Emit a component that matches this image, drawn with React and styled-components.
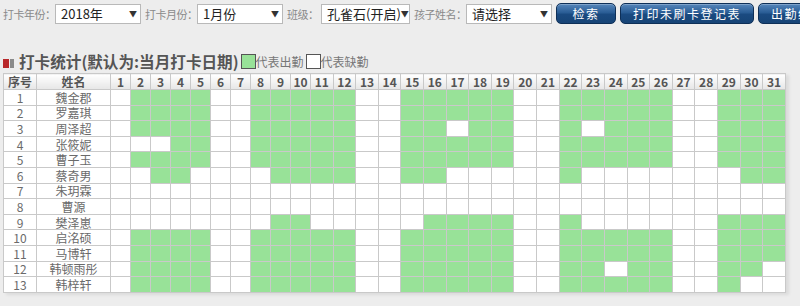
import React from 'react';
import styled, { createGlobalStyle } from 'styled-components';

const GlobalStyle = createGlobalStyle`
  body {
    margin: 0;
    background: #ededed;
    font-family: "Noto Sans CJK SC", "Noto Sans", sans-serif;
  }
`;

const Page = styled.div`
  width: 800px;
  height: 306px;
  overflow: hidden;
`;

const Toolbar = styled.div`
  display: flex;
  align-items: center;
  padding: 3px 0 0 3px;
  white-space: nowrap;
`;

const Field = styled.div`
  display: flex;
  align-items: center;
  margin-right: 4px;
`;

const Label = styled.span`
  width: ${props => props.w}px;
  font-size: 11px;
  letter-spacing: -0.5px;
  color: #8a8a8a;
`;

const SelectBox = styled.div`
  box-sizing: border-box;
  width: ${props => props.w}px;
  height: 20px;
  display: flex;
  align-items: center;
  justify-content: space-between;
  padding: 0 3px 0 5px;
  background: #fff;
  border: 1px solid #b9b9b9;
  font-size: 13px;
  color: #222;
`;

const Arrow = styled.span`
  font-size: 8px;
  color: #333;
`;

const Button = styled.div`
  box-sizing: border-box;
  width: ${props => props.w}px;
  height: 21px;
  margin-right: 4px;
  flex-shrink: 0;
  display: flex;
  align-items: center;
  justify-content: center;
  border: 1px solid #0e2f57;
  border-radius: 5px;
  background: linear-gradient(#5686bb 0%, #2a5d95 45%, #1a4a80 55%, #174476 100%);
  color: #fff;
  font-size: 12px;
  letter-spacing: 1.5px;
  box-shadow: inset 0 1px 0 rgba(255, 255, 255, 0.25);
`;

const TitleRow = styled.div`
  display: flex;
  align-items: flex-end;
  margin: 26px 0 0 3px;
  height: 22px;
`;

const Mark = styled.span`
  display: flex;
  align-items: center;
  gap: 1px;
  margin: 0 5px 4px 0;
`;

const MarkBlock = styled.span`
  width: ${props => props.w}px;
  height: 9px;
  background: ${props => props.c};
`;

const Title = styled.span`
  font-size: 15.6px;
  font-weight: bold;
  color: #555;
  line-height: 22px;
  margin-right: 2px;
`;

const Legend = styled.span`
  display: flex;
  align-items: flex-end;
  font-size: 12px;
  color: #777;
  margin-right: 2px;
  line-height: 14px;
  padding-bottom: 3px;
`;

const Swatch = styled.span`
  box-sizing: border-box;
  width: 15px;
  height: 15px;
  border: 1px solid #555;
  background: ${props => (props.on ? '#98e298' : '#fff')};
`;

const Table = styled.table`
  margin: 1px 0 0 3px;
  border-collapse: collapse;
  table-layout: fixed;
  width: 782px;
  box-shadow: 3px 2px 3px rgba(0, 0, 0, 0.08);
`;

const HeadCell = styled.th`
  height: 15px;
  padding: 0;
  border: 1px solid #c9c9c9;
  background: linear-gradient(#ffffff, #e6e6e6);
  font-size: 12px;
  font-weight: bold;
  color: #555;
  line-height: 13px;
  text-align: center;
`;

const Row = styled.tr`
  height: 15.6px;
`;

const Cell = styled.td`
  padding: 0;
  border: 1px solid #c9c9c9;
  background: ${props => (props.on ? '#98e298' : '#fff')};
  font-size: 12px;
  color: #6a6a6a;
  line-height: 13px;
  text-align: center;
`;

const base = [2, 3, 4, 5, 8, 9, 10, 11, 12, 15, 16, 17, 18, 19, 22, 23, 24, 25, 26, 29, 30, 31];
const without = (...days) => base.filter(d => !days.includes(d));

const students = [
  { name: '魏金郡', days: base },
  { name: '罗嘉琪', days: base },
  { name: '周泽超', days: without(17, 23) },
  { name: '张筱妮', days: without(2, 3) },
  { name: '曹子玉', days: base },
  { name: '蔡奇男', days: [3, 4, 9, 10, 11, 12, 15, 16, 22, 30, 31] },
  { name: '朱玥霖', days: [] },
  { name: '曹源', days: [] },
  { name: '樊泽崽', days: [9, 10, 16, 17, 18, 19, 22, 29, 30, 31] },
  { name: '启洺硕', days: base },
  { name: '马博轩', days: base },
  { name: '韩顿雨彤', days: without(24, 31) },
  { name: '韩梓轩', days: without(30, 31) },
];

const dayList = Array.from({ length: 31 }, (_, i) => i + 1);
const dayWidth = d => (d <= 10 ? 20 : 22.62);

const App = () => (
  <Page>
    <GlobalStyle />
    <Toolbar>
      <Field>
        <Label w={52}>打卡年份：</Label>
        <SelectBox w={86}>2018年<Arrow>▼</Arrow></SelectBox>
      </Field>
      <Field>
        <Label w={52}>打卡月份：</Label>
        <SelectBox w={86}>1月份<Arrow>▼</Arrow></SelectBox>
      </Field>
      <Field>
        <Label w={34}>班级：</Label>
        <SelectBox w={89}>孔雀石(开启)<Arrow>▼</Arrow></SelectBox>
      </Field>
      <Field>
        <Label w={52}>孩子姓名：</Label>
        <SelectBox w={86}>请选择<Arrow>▼</Arrow></SelectBox>
      </Field>
      <Button w={60}>检索</Button>
      <Button w={134}>打印未刷卡登记表</Button>
      <Button w={80}>出勤统计</Button>
    </Toolbar>
    <TitleRow>
      <Mark>
        <MarkBlock w={6} c="#b8282a" />
        <MarkBlock w={4} c="#8a8a8a" />
      </Mark>
      <Title>打卡统计(默认为:当月打卡日期)</Title>
      <Legend>
        <Swatch on />
        代表出勤
      </Legend>
      <Legend>
        <Swatch />
        代表缺勤
      </Legend>
    </TitleRow>
    <Table>
      <colgroup>
        <col style={{ width: 33 }} />
        <col style={{ width: 74 }} />
        {dayList.map(d => (
          <col key={d} style={{ width: dayWidth(d) }} />
        ))}
      </colgroup>
      <thead>
        <tr>
          <HeadCell>序号</HeadCell>
          <HeadCell>姓名</HeadCell>
          {dayList.map(d => (
            <HeadCell key={d}>{d}</HeadCell>
          ))}
        </tr>
      </thead>
      <tbody>
        {students.map((s, i) => (
          <Row key={s.name}>
            <Cell>{i + 1}</Cell>
            <Cell>{s.name}</Cell>
            {dayList.map(d => (
              <Cell key={d} on={s.days.includes(d)} />
            ))}
          </Row>
        ))}
      </tbody>
    </Table>
  </Page>
);

export default App;
